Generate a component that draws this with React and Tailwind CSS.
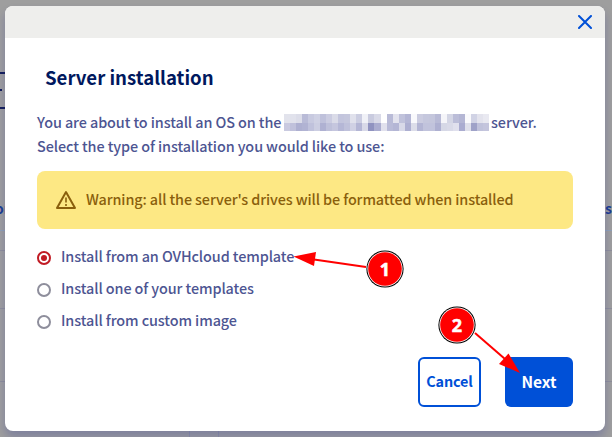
import React from 'react';

const FONT = "font-['Noto_Sans_CJK_SC','Open_Sans',sans-serif]";

const MASK_TOP = ['e2e3ec','e1e2ec','dcdde9','b9bbd7','c8cae0','cfd1e4','bfc1db','cbcce1','dadbe8','c3c5dd','c5c7dd','e0e1ec','cbcde1','f0f1f7','c9cbdf','d9dae8','ffffff','b9bbd7','e3e3ee','c0c2db','b4b6d5','f9f9fc','cbcce0','c5c7dd','c4c6dc','b8bad6','f5f5f9','d4d6e5','bbbdd8','b4b6d4','fafafc','d1d3e5','e3e3ed','e9e9f1'];
const MASK_BOTTOM = ['c9cae0','c0c1db','aeb0d1','b1b3d3','c0c2dc','cccee2','afb1d2','bec0da','c5c6de','b5b7d6','bfc1db','d0d1e4','b4b6d5','d8d9e8','9093c0','abadd0','e1e1ed','b9bbd8','b4b6d5','d8d9e8','adafd1','dcdde9','b3b5d4','c1c3dc','c1c3dc','aeb0d1','d6d8e6','d9dae8','e0e0ed','aaacd0','dfe0eb','9fa2c8','c0c2db','c4c5dd'];

function MaskedName() {
  return (
    <span className="mr-[2px] ml-[2px] flex h-[17px] w-[205px] flex-col">
      {[MASK_TOP, MASK_BOTTOM].map((row, i) => (
        <span key={i} className={`flex ${i === 0 ? 'h-[9px]' : 'h-[8px]'}`}>
          {row.map((c, j) => (
            <span key={j} className="flex-1" style={{ backgroundColor: `#${c}` }} />
          ))}
        </span>
      ))}
    </span>
  );
}

function Option({ label, checked }) {
  return (
    <label className="flex h-8 items-center">
      <span className={`mt-[2px] flex size-[14px] items-center justify-center rounded-full border-2 ${checked ? 'border-[#c11b24]' : 'border-[#8e8e9c]'}`}>
        {checked && <span className="size-[6px] rounded-full bg-[#c11b24]" />}
      </span>
      <span className="ml-[10px] pb-[2px] text-[14.4px] leading-6 font-medium tracking-[-0.09px] whitespace-nowrap">{label}</span>
    </label>
  );
}

function Backdrop() {
  return (
    <div className="absolute inset-0 overflow-hidden bg-[#9e9e9e]">
      <div className="absolute top-[72px] -left-2 h-[37px] w-6 border-y-2 border-[#16205a]" />
      <div className="absolute top-[89px] left-0 h-[2px] w-[2px] bg-[#16205a]" />
      <span className="absolute top-[198px] -left-[5px] text-[14px] leading-5 font-bold text-[#1d3f91]">or</span>
      <span className="absolute top-[198px] left-[596px] text-[14px] leading-5 font-bold text-[#1d3f91]">ns</span>
      <div className="absolute top-[230px] left-0 h-[21px] w-full border-t border-b border-t-[#8fa0b5] border-b-[#8f8f9a]" />
      <div className="absolute top-[308px] left-0 h-[74px] w-full border-y border-[#8f8f9a]" />
      <div className="absolute top-[251px] left-[189px] h-[190px] w-[30px] border-x border-[#9092a2]" />
    </div>
  );
}

function Annotations() {
  return (
    <svg className="pointer-events-none absolute inset-0" width="612" height="437" viewBox="0 0 612 437">
      <g stroke="#f00" strokeWidth="2">
        <path d="M366 267L314 259.500" />
        <path d="M475 333L505 359" />
      </g>
      <g fill="#f00">
        <path d="M293.500 256.500L316 252L314 266Z" />
        <path d="M520 373L508.500 353.500L499 364Z" />
      </g>
      {[[385, 269, '1'], [457, 325, '2']].map(([x, y, n]) => (
        <g key={n}>
          <circle cx={x} cy={y} r="18.600" fill="#000" />
          <circle cx={x} cy={y} r="17.600" fill="#fff" />
          <circle cx={x} cy={y} r="16.800" fill="#f00" />
          <text x={x} y={y + 6.500} textAnchor="middle" stroke="#fff" strokeWidth=".5" className="fill-white font-['Open_Sans',sans-serif] text-[18px] font-bold">{n}</text>
        </g>
      ))}
    </svg>
  );
}

export default function App() {
  return (
    <div className={`relative h-[437px] w-[612px] overflow-hidden text-[#4d5592] ${FONT}`}>
      <Backdrop />
      <div className="relative px-[5px] pt-[6px]">
        <section className="flex h-[425px] w-[600px] flex-col overflow-hidden rounded-lg bg-white shadow-[0_6px_10px_rgba(0,14,156,0.2)]">
          <header className="flex h-8 shrink-0 items-center justify-end bg-[#eeeeec] pr-[13px]">
            <svg width="14" height="14" viewBox="0 0 14 14" fill="none" stroke="#0050d7" strokeWidth="2" strokeLinecap="round">
              <path d="M1 1L13 13M13 1L1 13" />
            </svg>
          </header>
          <div className="flex flex-col px-8 pt-[25px]">
            <h1 className="ml-2 text-[18.600px] leading-7 font-bold whitespace-nowrap text-[#00185e]">Server installation</h1>
            <div className="mt-[19px] text-[14.4px] leading-6 font-medium tracking-[-0.085px] whitespace-nowrap">
              <div className="flex h-6 items-center">
                <span className="w-[245px]">You are about to install an OS on the</span>
                <MaskedName />
                <span>server.</span>
              </div>
              <p>Select the type of installation you would like to use:</p>
            </div>
            <div className="mt-[13px] flex h-[58px] items-center rounded-lg bg-[#fde884] pl-[18px] text-[#8a5f0c]">
              <svg width="22" height="20" viewBox="0 0 22 20" fill="none" stroke="currentColor" strokeWidth="2" strokeLinejoin="round">
                <path d="M11 2L20 18H2Z" />
                <path d="M11 7.500V12.500M11 14V16" strokeWidth="1.600" />
              </svg>
              <span className="ml-[9px] pb-[2px] text-[14.4px] leading-6 font-medium tracking-[-0.105px] whitespace-nowrap">Warning: all the server's drives will be formatted when installed</span>
            </div>
            <div className="mt-3 flex flex-col">
              <Option label="Install from an OVHcloud template" checked />
              <Option label="Install one of your templates" />
              <Option label="Install from custom image" />
            </div>
            <footer className="mt-5 flex justify-end gap-6 text-[14.4px] font-bold">
              <button className="h-[50px] w-[63px] rounded-md border-2 border-[#0050d7] pb-[2px] tracking-[-0.1px] text-[#0050d7]">Cancel</button>
              <button className="h-[50px] w-[68px] rounded-md bg-[#0050d7] pb-px text-[15.500px] text-white">Next</button>
            </footer>
          </div>
        </section>
      </div>
      <Annotations />
    </div>
  );
}
